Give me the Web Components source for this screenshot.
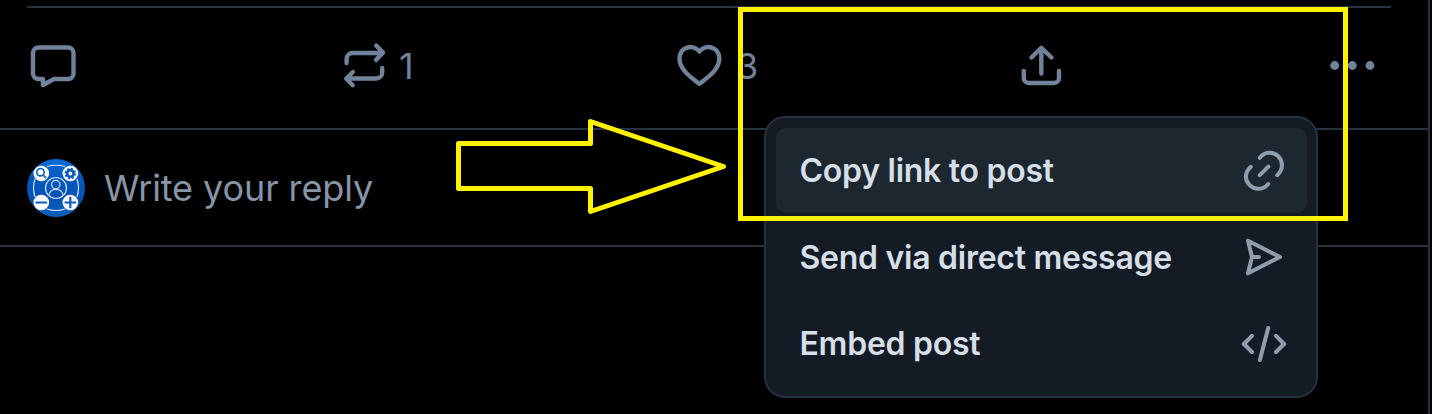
<!DOCTYPE html>
<html lang="en">
<head>
<meta charset="utf-8">
<title>Post actions</title>
<style>
html,body{margin:0;height:100%;background:#000;overflow:hidden}
body{font-family:Inter,"Liberation Sans",sans-serif}
</style>
</head>
<body>
<post-thread></post-thread>
<script>
const ICONS = {
  reply: ['30 41 50 50', '<path d="M38.500 47.500H68a5.500 5.500 0 0 1 5.500 5.500V73.500a5.500 5.500 0 0 1-5.500 5.500H54L43 85V79H38.500a5.500 5.500 0 0 1-5.500-5.500V53a5.500 5.500 0 0 1 5.500-5.500Z"/>'],
  repost: ['340 41 50 50', '<path d="M346.600 63v-4a6 6 0 0 1 6-6h30M376.200 45.500l6.800 7-6.800 7.300M382.200 68v4.500a6 6 0 0 1-6 6h-29M352.800 72l-6.600 6.700 6.600 6.500"/>'],
  like: ['674 41 50 50', '<path d="M699.400 83.800C692 78 679.500 70 679.500 58.800 679.500 46.500 693 43.500 699.400 51.500 705.800 43.500 719.300 46.500 719.300 58.800 719.300 70 706.800 78 699.400 83.800Z"/>'],
  share: ['1016 41 50 50', '<path d="M1041.300 73.500V48M1031.500 57.500l9.800-9.700 10.200 9.700M1023.800 71v7a5 5 0 0 0 5 5h25.200a5 5 0 0 0 5-5v-7"/>'],
  more: ['1327 41 50 50', '<g fill="currentColor" stroke="none"><circle cx="1334.700" cy="65.500" r="4.400"/><circle cx="1352.300" cy="65.500" r="4.400"/><circle cx="1370" cy="65.500" r="4.400"/></g>'],
  link: ['1239 146 50 50', '<path d="M1259.800 157.800C1264.500 151.300 1273 151.300 1278.200 156.200 1283.600 161.500 1283.200 169.500 1277.200 175.200M1268.200 184C1263 190.200 1254.700 190.300 1249.700 185.200 1244.500 180 1244.300 173 1250.800 166.800M1259.800 175.200l8.500-8.500"/>'],
  send: ['1239 232 50 50', '<path d="M1248 240.800 1280 257 1248 273.300 1252 257ZM1252 257h7"/>'],
  code: ['1239 319 50 50', '<path d="M1252 335.800l-8.100 8.200 8.100 8M1276 335.800l8.100 8.200-8.100 8M1268.200 328l-8.300 32"/>']
};
function define(name, html, setup) {
  const template = document.createElement('template');
  template.innerHTML = html;
  customElements.define(name, class extends HTMLElement {
    connectedCallback() {
      if (this.shadowRoot) return;
      const root = this.attachShadow({mode: 'open'});
      root.append(template.content.cloneNode(true));
      if (setup) setup(this, root);
    }
  });
}
class LineIcon extends HTMLElement {
  static observedAttributes = ['name'];
  constructor() {
    super();
    this.attachShadow({mode: 'open'}).innerHTML = `<style>
:host{display:block;width:50px;height:50px;flex:none}
svg{display:block;width:100%;height:100%;fill:none;stroke:currentColor;stroke-width:var(--stroke,4);stroke-linecap:round;stroke-linejoin:round}
</style><svg aria-hidden="true"></svg>`;
  }
  attributeChangedCallback(attr, previous, name) {
    if (!ICONS[name]) return;
    const svg = this.shadowRoot.querySelector('svg');
    svg.setAttribute('viewBox', ICONS[name][0]);
    svg.innerHTML = ICONS[name][1];
  }
}
customElements.define('line-icon', LineIcon);
define('post-action', `<style>
:host{display:flex;align-items:center;color:#70839b;font-size:36px;line-height:50px}
line-icon{--stroke:4.4}
span{margin-left:var(--count-gap,9px)}
</style><line-icon></line-icon><span><slot></slot></span>`, (el, root) => {
  root.querySelector('line-icon').setAttribute('name', el.getAttribute('icon'));
});
define('action-bar', `<style>
:host{display:grid;grid-template-columns:310px 334px 342px 311px 1fr;align-items:center;height:122px;box-sizing:border-box;padding:0 0 4px 3px;margin:0 37px 0 27px;border-top:2px solid #253341}
.heart{--count-gap:12px}
</style>
<post-action icon="reply"></post-action><post-action icon="repost">1</post-action><post-action icon="like" class="heart">3</post-action><post-action icon="share"></post-action><post-action icon="more"></post-action>`);
define('user-avatar', `<style>:host{display:block;width:58px;height:58px}svg{display:block}</style>
<svg width="58" height="58" viewBox="0 0 58 58" fill="none">
<defs><linearGradient id="blue" x1="0" y1="0" x2="0" y2="1"><stop stop-color="#0a6cd6"/><stop offset=".35" stop-color="#0757bd"/><stop offset=".7" stop-color="#0753b4"/><stop offset="1" stop-color="#0b62be"/></linearGradient></defs>
<circle cx="29" cy="29" r="29" fill="url(#blue)"/>
<g stroke="#cfe3fa" stroke-width="1.200"><circle cx="29" cy="29" r="10.500"/><circle cx="28.800" cy="25.600" r="4.200"/><path d="M22 36.300c.5-4 3-6 7-6s6.500 2 7 6"/><path d="M20 7.500Q29 5 38 7.500M20 50Q29 53 38 50M8 20Q5 29 8 38M50 20Q53 29 50 38"/></g>
<g fill="#fff"><circle cx="14.300" cy="14.500" r="7.800"/><circle cx="43.300" cy="14.500" r="7.800"/><circle cx="14.300" cy="43.500" r="7.800"/><circle cx="43.300" cy="43.500" r="7.800"/></g>
<g stroke="#075cbd" stroke-width="1.600"><circle cx="13.500" cy="13.200" r="3.700"/><path d="m16.200 16 3 3.200"/><circle cx="43.300" cy="14.500" r="3.300" stroke-width="2.800"/><circle cx="43.300" cy="14.500" r="5" stroke-width="1.600" stroke-dasharray="2 1.927"/><path d="M8.500 43.500h11.600M37.500 43.500h11.600M43.300 37.700v11.600" stroke-width="2.200"/></g>
</svg>`);
define('reply-box', `<style>
:host{display:flex;align-items:center;gap:19px;box-sizing:border-box;height:119px;padding:0 27px;border-top:2px solid #253341;border-bottom:2px solid #2b303e;color:#8795a8;font-size:36px;line-height:44px;letter-spacing:-.1px}
</style><user-avatar></user-avatar><span><slot></slot></span>`);
define('menu-item', `<style>
:host{display:flex;align-items:center;justify-content:space-between;box-sizing:border-box;height:85px;padding:0 18px 0 23.500px;border-radius:10px;color:#d6dfe7;font-size:32px;font-weight:600;line-height:40px;letter-spacing:-.26px;white-space:nowrap}
:host([active]){background:#1c2730}
span{margin-top:1px}
line-icon{color:#8f9dac}
</style><span><slot></slot></span><line-icon></line-icon>`, (el, root) => {
  root.querySelector('line-icon').setAttribute('name', el.getAttribute('icon'));
});
define('share-menu', `<style>
:host{display:flex;flex-direction:column;gap:1.5px;position:absolute;left:764px;top:116px;width:554px;height:282px;box-sizing:border-box;padding:10px 9px 10px 10px;border:2px solid #253341;border-radius:21px;background:#141b24}
</style><menu-item icon="link" active>Copy link to post</menu-item><menu-item icon="send">Send via direct message</menu-item><menu-item icon="code">Embed post</menu-item>`);
define('callout-marks', `<style>
:host{display:block;position:absolute;inset:0;pointer-events:none}svg{display:block}
</style><svg width="1432" height="414" fill="none" stroke="#fff200" stroke-width="5" stroke-linejoin="round"><rect x="740.500" y="9.500" width="605" height="209" stroke-linejoin="miter"/><path d="M458.500 143.500H590.500V121.500L723.500 166.500 590.500 211.500V188.500H458.500Z"/></svg>`);
define('post-thread', `<style>
:host{display:block;position:relative;width:1432px;height:414px;background:#000;overflow:hidden}
main{width:1428px;height:414px;padding-top:6px;border-right:2px solid #253341}
</style><main><action-bar></action-bar><reply-box>Write your reply</reply-box></main><share-menu></share-menu><callout-marks></callout-marks>`);
</script>
</body>
</html>
